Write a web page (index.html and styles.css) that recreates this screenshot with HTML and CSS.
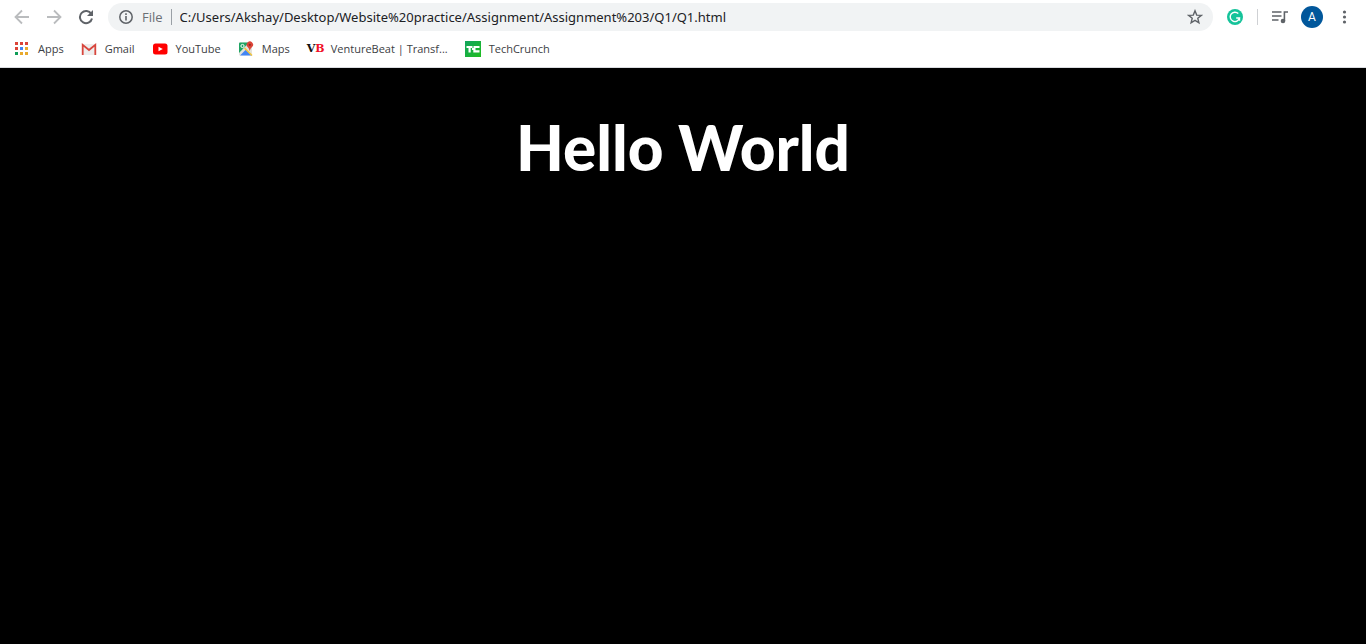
FILE: index.html
```html
<!DOCTYPE html>
<html lang="en">
<head>
<meta charset="utf-8">
<title>Hello World</title>
<link rel="stylesheet" href="styles.css">
</head>
<body>
<header class="browser">
  <div class="toolbar">
    <nav class="navigation" aria-label="History">
      <button class="icon-button faded" aria-label="Back"><svg width="16" height="16" viewBox="0 0 16 16"><path d="M15 8H2M8 1.500 1.500 8 8 14.500" fill="none" stroke="currentColor" stroke-width="1.800"/></svg></button>
      <button class="icon-button faded" aria-label="Forward"><svg width="16" height="16" viewBox="0 0 16 16"><path d="M1 8h13M8 1.500 14.500 8 8 14.500" fill="none" stroke="currentColor" stroke-width="1.800"/></svg></button>
      <button class="icon-button" aria-label="Reload"><svg width="16" height="16" viewBox="0 0 16 16"><path d="M13.300 5A6.100 6.100 0 1 0 14 9.500" fill="none" stroke="currentColor" stroke-width="2"/><path d="M15 1v6H9z" fill="currentColor"/></svg></button>
    </nav>
    <div class="address">
      <button class="icon-button" aria-label="Site information"><svg width="16" height="16" viewBox="0 0 16 16"><circle cx="8" cy="8" r="6.200" fill="none" stroke="currentColor" stroke-width="1.500"/><path d="M8 7v4.500M8 4.300v1.600" stroke="currentColor" stroke-width="1.600"/></svg></button>
      <label class="scheme" for="url">File</label>
      <input class="url" id="url" type="text" spellcheck="false" value="C:/Users/Akshay/Desktop/Website%20practice/Assignment/Assignment%203/Q1/Q1.html">
      <button class="icon-button" aria-label="Bookmark this page"><svg width="16" height="16" viewBox="0 0 16 16"><path d="m8 1.800 1.700 4.300 4.600.3-3.500 2.900 1.100 4.500L8 11.300l-3.900 2.500 1.100-4.500L1.700 6.400l4.600-.3z" fill="none" stroke="currentColor" stroke-width="1.400"/></svg></button>
    </div>
    <div class="actions">
      <button class="icon-button" aria-label="Grammarly"><svg width="16" height="16" viewBox="0 0 16 16"><circle cx="8" cy="8" r="8" fill="#15c39a"/><path d="M11.300 4.600A4.700 4.700 0 1 0 12.500 9H9.200M12.500 8.500v3.300" fill="none" stroke="#fff" stroke-width="1.400"/></svg></button>
      <span class="divider"></span>
      <button class="icon-button" aria-label="Media controls"><svg width="16" height="16" viewBox="0 0 16 16"><path d="M0 3h9.500M0 7h9.500M0 11h6.500M12.400 12V3H16" fill="none" stroke="currentColor" stroke-width="1.600"/><circle cx="11" cy="12" r="2.300" fill="currentColor"/></svg></button>
      <button class="avatar" aria-label="Profile">A</button>
      <button class="icon-button" aria-label="Menu"><svg width="16" height="16" viewBox="0 0 16 16" fill="currentColor"><circle cx="8.500" cy="3" r="1.600"/><circle cx="8.500" cy="8" r="1.600"/><circle cx="8.500" cy="13" r="1.600"/></svg></button>
    </div>
  </div>
  <nav class="bookmarks" aria-label="Bookmarks">
    <a class="bookmark" href="#"><svg width="16" height="16" viewBox="0 0 16 16"><path d="M1 1h3v3H1zM6 1h3v3H6zM11 1h3v3h-3zM1 6h3v3H1z" fill="#db4437"/><path d="M6 6h3v3H6z" fill="#4285f4"/><path d="M11 6h3v3h-3zM11 11h3v3h-3zM6 11h3v3H6z" fill="#e8a92c"/><path d="M1 11h3v3H1z" fill="#0f9d58"/></svg>Apps</a>
    <a class="bookmark" href="#"><svg width="16" height="16" viewBox="0 0 16 16"><path d="M1 3h14v11H1z" fill="#eee"/><path d="M1.700 14V3.800L8 9l6.300-5.200V14" fill="none" stroke="#d8463d" stroke-width="1.800"/></svg>Gmail</a>
    <a class="bookmark" href="#"><svg width="16" height="16" viewBox="0 0 16 16"><rect x="1" y="2.500" width="14.500" height="11" rx="2.500" fill="#f00"/><path d="m6.500 5.700 4.300 2.300-4.300 2.300z" fill="#fff"/></svg>YouTube</a>
    <a class="bookmark" href="#"><svg width="16" height="16" viewBox="0 0 16 16"><rect x="1" y="1.500" width="13" height="13" rx="1" fill="#e3e3dd"/><path d="M1 2.500q0-1 1-1h9L1 12z" fill="#1fa463"/><path d="m2 14.500 6-6 6 6z" fill="#4285f4"/><path d="m6.500 7 7.500 7.500" stroke="#f4c63d" stroke-width="1.600"/><circle cx="4.500" cy="5" r="1.600" fill="none" stroke="#fff"/><path d="M11.700 10q-.5-2.500-2-4a3.200 3.200 0 1 1 4.300 0q-1.700 1.500-2.300 4z" fill="#db4437"/><circle cx="11.800" cy="3.800" r="1.100" fill="#8d2b24"/></svg>Maps</a>
    <a class="bookmark" href="#"><span class="vb-logo" aria-hidden="true">V<b>B</b></span>VentureBeat | Transf...</a>
    <a class="bookmark" href="#"><svg width="16" height="16" viewBox="0 0 16 16"><defs><linearGradient id="tc" x1="0" y1="0" x2="1" y2="1"><stop stop-color="#12a45e"/><stop offset="1" stop-color="#1fbd1f"/></linearGradient></defs><path d="M0 0h16v16H0z" fill="url(#tc)"/><path d="M1.500 5h6v2H5.700v4.500H3.500V7h-2zM8.500 5h6v2h-4v2.300h4v2.200H8.300V9H7V7h1.500z" fill="#fff"/></svg>TechCrunch</a>
  </nav>
</header>
<main class="page">
  <h1 class="greeting">Hello World</h1>
</main>
</body>
</html>
```
FILE: styles.css
```css
* { box-sizing: border-box; }
body {
  margin: 0;
  min-height: 100vh;
  display: flex;
  flex-direction: column;
  background: #000;
  font-family: "Segoe UI", "Open Sans", sans-serif;
}
button, input { font: inherit; border: 0; padding: 0; background: none; }
svg { display: block; flex: none; }
.browser { background: #fff; border-bottom: 1px solid #dadce0; }
.toolbar {
  display: flex;
  align-items: center;
  padding: 3px 14px;
}
.navigation { display: flex; gap: 16px; margin-right: 14px; }
.icon-button { display: flex; flex: none; color: #5f6368; }
.faded { color: #babcbe; }
.address {
  flex: 1;
  min-width: 0;
  display: flex;
  align-items: center;
  height: 28px;
  padding: 0 10px;
  border-radius: 14px;
  background: #f1f3f4;
}
.scheme {
  margin-left: 8px;
  padding-right: 8px;
  border-right: 1px solid #9aa0a6;
  font-size: 13px;
  line-height: 16px;
  color: #6b6f74;
}
.url {
  flex: 1;
  min-width: 0;
  margin-left: 8px;
  font-family: "Segoe UI", "Noto Sans", sans-serif;
  font-size: 13px;
  line-height: 20px;
  color: #202124;
}
.actions { display: flex; align-items: center; margin-left: 14px; }
.divider { width: 1px; height: 16px; margin: 0 14px; background: #cfd1d4; }
.avatar {
  width: 22px;
  height: 22px;
  margin: 0 13px;
  border-radius: 50%;
  background: #01579b;
  color: #fff;
  font-family: Roboto, sans-serif;
  font-size: 12px;
  line-height: 22px;
}
.bookmarks {
  display: flex;
  align-items: center;
  gap: 17px;
  height: 33px;
  padding: 0 14px 3px;
}
.bookmark {
  display: flex;
  align-items: center;
  gap: 8px;
  color: #3c4043;
  font-size: 11px;
  line-height: 16px;
  text-decoration: none;
  white-space: nowrap;
}
.vb-logo {
  width: 16px;
  color: #111;
  font-family: "DejaVu Serif", serif;
  font-size: 11px;
  font-weight: 700;
}
.vb-logo b { color: #f01028; }
.page { flex: 1; }
.greeting {
  margin: 34px 0;
  color: #fff;
  font-family: "Comic Sans MS", Lato, sans-serif;
  font-size: 62px;
  font-weight: 900;
  line-height: 90px;
  text-align: center;
}
```
